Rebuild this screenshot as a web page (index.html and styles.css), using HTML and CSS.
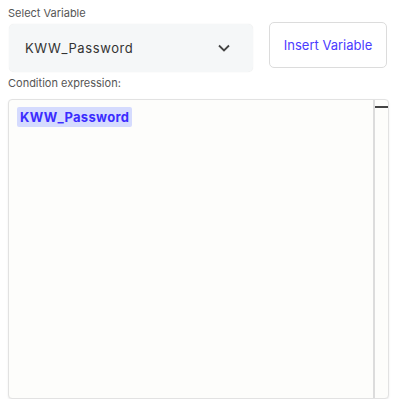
FILE: index.html
```html
<!DOCTYPE html>
<html lang="en">
<head>
    <meta charset="UTF-8">
    <meta name="viewport" content="width=device-width, initial-scale=1.0">
    <title>Condition Editor</title>
    <link rel="stylesheet" href="styles.css">
</head>
<body>

<div class="panel">
    <label class="field-label">Select Variable</label>
    <div class="variable-row">
        <div class="select-box">
            <span class="select-value">KWW_Password</span>
            <svg class="chevron" width="14" height="14" viewBox="0 0 14 14">
                <path d="M2 4.5 L7 9.5 L12 4.5" fill="none" stroke="#444" stroke-width="1.8"/>
            </svg>
        </div>
        <button class="insert-btn">Insert Variable</button>
    </div>

    <label class="field-label cond-label">Condition expression:</label>
    <!-- expression editor -->
    <div class="editor">
        <div class="editor-body">
            <span class="token">KWW_Password</span>
        </div>
        <div class="editor-scroll">
            <div class="scroll-thumb"></div>
        </div>
    </div>
</div>

</body>
</html>
```

FILE: styles.css
```css
body {
    margin: 0;
    font-family: Inter, Roboto, sans-serif;
    background-color: #fff;
}
.panel {
    padding: 6px 19px 0 8px;
}
.field-label {
    display: block;
    font-size: 11px;
    color: #555;
    line-height: 14px;
}
.variable-row {
    display: flex;
    align-items: flex-start;
    gap: 16px;
    margin-top: 2px;
}
.select-box {
    flex: 1;
    display: flex;
    align-items: center;
    justify-content: space-between;
    height: 48px;
    margin: 2px 0 0 1px;
    padding: 0 22px 0 16px;
    background-color: #f5f7f8;
    border-radius: 5px;
    box-shadow: 0 0 1px rgba(0, 0, 0, 0.12);
}
.select-value {
    font-size: 13px;
    color: #333;
    letter-spacing: 0.6px;
}
.insert-btn {
    width: 118px;
    height: 46px;
    background-color: #fff;
    border: 1px solid #dcdcdc;
    border-radius: 5px;
    font-family: Inter, Roboto, sans-serif;
    font-size: 13px;
    color: #4b3bff;
    padding: 0;
}
.cond-label {
    margin-top: 4px;
}
.editor {
    display: flex;
    height: 298px;
    margin: 9px -2px 0 0;
    background-color: #fdfdfb;
    border: 1px solid #e2e2e2;
    border-radius: 4px;
    box-shadow: 0 1px 2px rgba(0, 0, 0, 0.08);
}
.editor-body {
    flex: 1;
    padding: 6px 8px;
}
.token {
    display: inline-block;
    padding: 2px 3px;
    background-color: #d5dbfe;
    border-radius: 2px;
    font-size: 13px;
    font-weight: bold;
    color: #3b2cff;
    letter-spacing: 0.3px;
}
.editor-scroll {
    width: 13px;
    border-left: 2px solid #dcdcdc;
    padding-top: 6px;
}
.scroll-thumb {
    height: 2px;
    background-color: #444;
}
```
